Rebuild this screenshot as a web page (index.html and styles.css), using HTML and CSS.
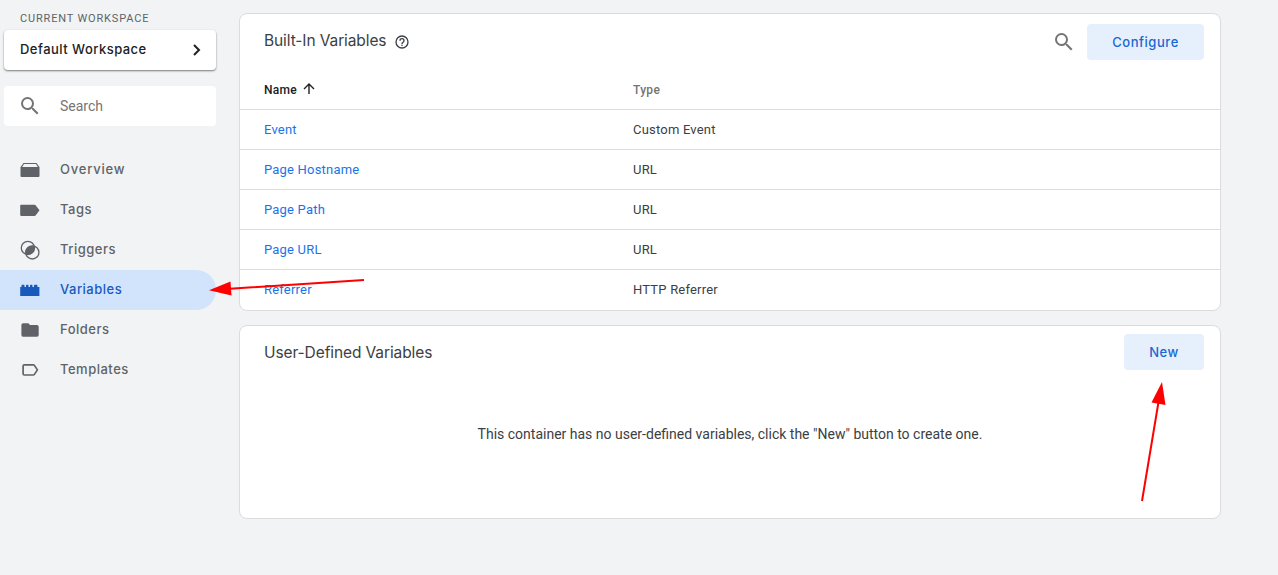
FILE: index.html
```html
<!DOCTYPE html>
<html lang="en">
<head>
<meta charset="utf-8">
<title>Variables</title>
<link rel="stylesheet" href="styles.css">
</head>
<body>
<div class="app">
  <aside class="sidebar">
    <div class="ws-label">CURRENT WORKSPACE</div>
    <div class="workspace"><span>Default Workspace</span>
      <svg width="9" height="12" viewBox="0 0 9 12"><path d="M2 1l5 5-5 5" fill="none" stroke="#202124" stroke-width="2"/></svg>
    </div>
    <div class="search">
      <svg class="icon" viewBox="0 0 24 24"><path fill="#757575" d="M15.5 14h-.79l-.28-.27A6.47 6.47 0 0 0 16 9.500 6.500 6.500 0 1 0 9.500 16c1.610 0 3.090-.59 4.230-1.570l.27.28v.79l5 4.990L20.490 19l-4.990-5zm-6 0C7.010 14 5 11.990 5 9.500S7.010 5 9.500 5 14 7.010 14 9.500 11.990 14 9.500 14z"/></svg>
      <span>Search</span>
    </div>
    <nav class="nav">
      <a class="item"><svg class="icon sm" viewBox="0 0 20 20"><path fill="currentColor" fill-rule="evenodd" d="M3.500 3h13l2.500 3.500 .5.5v9q0 1-1 1h-17q-1 0-1-1V7l.5-.5zM4 4L2.200 7h15.600L16 4z"/></svg><span class="overview">Overview</span></a>
      <a class="item"><svg class="icon sm" viewBox="0 0 20 20"><path fill="currentColor" d="M1 4.700h13.500q.8 0 1.300.7l3.700 4.900-3.700 4.900q-.5.700-1.300.7H1q-.8 0-.8-.8V5.500q0-.8.8-.8z"/></svg><span>Tags</span></a>
      <a class="item"><svg class="icon sm" viewBox="0 0 20 20"><g fill="none" stroke="currentColor" stroke-width="1.300"><circle cx="7.900" cy="7.900" r="6.600"/><circle cx="12.300" cy="12.400" r="6.600"/></g><path fill="currentColor" d="M14.300 6.100A6.600 6.600 0 0 1 5.900 14.200 6.600 6.600 0 0 1 14.300 6.100z"/></svg><span>Triggers</span></a>
      <a class="item active"><svg class="icon sm" viewBox="0 0 20 20"><path fill="currentColor" d="M.2 7h1.300V5.500q0-.7.7-.7h1.600q.7 0 .7.700V7h1.500V5.500q0-.7.7-.7h1.100q.7 0 .7.700V7h1.500V5.500q0-.7.7-.7h1.100q.7 0 .7.700V7H14V5.500q0-.7.7-.7h2q.7 0 .7.700V7h2v9H.2z"/></svg><span>Variables</span></a>
      <a class="item"><svg class="icon sm" viewBox="0 0 20 20"><path fill="currentColor" d="M3 3.300h5.300L10 5h7q1.700 0 1.700 1.700v8.400q0 1.600-1.700 1.600H3q-1.600 0-1.600-1.600V4.900Q1.400 3.300 3 3.300z"/></svg><span>Folders</span></a>
      <a class="item"><svg class="icon sm" viewBox="0 0 20 20"><path fill="none" stroke="currentColor" stroke-width="1.700" stroke-linejoin="round" d="M4.300 4.800h8.900q.8 0 1.200.6l3 4.500-3 4.500q-.4.600-1.200.6H4.300q-1.200 0-1.200-1.200V6q0-1.200 1.200-1.200z"/></svg><span>Templates</span></a>
    </nav>
  </aside>
  <main class="main">
    <section class="card">
      <header class="head">
        <h2>Built-In Variables</h2>
        <svg class="help" viewBox="0 0 24 24"><path fill="#3c4043" d="M11 18h2v-2h-2v2zm1-16a10 10 0 1 0 0 20 10 10 0 0 0 0-20zm0 18a8 8 0 1 1 0-16 8 8 0 0 1 0 16zm0-14a4 4 0 0 0-4 4h2a2 2 0 1 1 4 0c0 2-3 1.750-3 5h2c0-2.250 3-2.500 3-5a4 4 0 0 0-4-4z"/></svg>
        <svg class="icon find" viewBox="0 0 24 24"><path fill="#757575" d="M15.500 14h-.79l-.28-.27A6.470 6.470 0 0 0 16 9.500 6.500 6.500 0 1 0 9.500 16c1.610 0 3.090-.59 4.230-1.570l.27.28v.79l5 4.990L20.490 19l-4.990-5zm-6 0C7.010 14 5 11.990 5 9.500S7.010 5 9.500 5 14 7.010 14 9.500 11.990 14 9.500 14z"/></svg>
        <button class="btn configure">Configure</button>
      </header>
      <div class="row th"><span class="name">Name <svg width="12" height="12" viewBox="0 0 12 12"><path d="M6 11V1M1 6l5-5 5 5" fill="none" stroke="#202124" stroke-width="1.400"/></svg></span><span class="type">Type</span></div>
      <div class="row"><a>Event</a><span>Custom Event</span></div>
      <div class="row"><a>Page Hostname</a><span>URL</span></div>
      <div class="row"><a>Page Path</a><span>URL</span></div>
      <div class="row"><a>Page URL</a><span>URL</span></div>
      <div class="row"><a>Referrer</a><span>HTTP Referrer</span></div>
    </section>
    <section class="card user">
      <header class="head second"><h2>User-Defined Variables</h2><button class="btn new">New</button></header>
      <p class="empty">This container has no user-defined variables, click the "New" button to create one.</p>
    </section>
  </main>
</div>
<svg class="arrows" viewBox="0 0 1278 575"><g stroke="#f00" stroke-width="2"><path d="M364 280L230 288.800M1142 501L1158.500 402"/></g><path fill="#f00" d="M209 290.200L230.500 281.500 231.500 295.500zM1162 382L1151.500 402.500 1165.500 405z"/></svg>
</body>
</html>
```
FILE: styles.css
```css
* { box-sizing: border-box; }
body { margin: 0; height: 575px; overflow: hidden; background: #f1f3f4; font-family: Roboto, sans-serif; color: #3c4043; }
svg { display: block; flex: none; }
.app { display: flex; height: 575px; }
.sidebar { width: 239px; padding: 11px 22px 0 0; flex: none; }
.ws-label { margin-left: 20px; height: 19px; font-size: 11px; line-height: 15px; letter-spacing: .83px; color: #5f6368; }
.workspace { margin-left: 4px; width: 212px; height: 40px; padding: 0 15px 0 16px; display: flex; align-items: center; justify-content: space-between; background: #fff; border-radius: 4px; box-shadow: 0 1px 2px rgba(0,0,0,.5); font: 500 13px/38px Inter, sans-serif; color: #202124; }
.workspace span { padding-bottom: 2px; letter-spacing: .47px; white-space: nowrap; }
.search { margin: 16px 0 24px 4px; width: 212px; height: 40px; padding-left: 14px; display: flex; align-items: center; gap: 18px; background: #fff; border-radius: 4px; font-size: 14px; color: #757575; }
.icon { width: 24px; height: 24px; }
.sm { width: 20px; height: 20px; }
.item { display: flex; align-items: center; gap: 20px; width: 216px; height: 40px; padding-left: 20px; border-radius: 0 20px 20px 0; font: 500 13px/38px Inter, sans-serif; color: #5f6368; }
.item span { padding-bottom: 2px; letter-spacing: .5px; }
.item .overview { letter-spacing: .8px; }
.item.active { background: #d2e3fc; color: #185abc; }
.main { width: 982px; padding-top: 13px; flex: none; }
.card { height: 298px; background: #fff; border: 1px solid #dadce0; border-radius: 8px; }
.user { height: 194px; margin-top: 14px; }
.head { display: flex; align-items: center; height: 56px; padding: 0 16px 0 24px; }
.second { height: 52px; justify-content: space-between; }
h2 { margin: 0; padding-bottom: 2px; font: 400 15.5px/24px Inter, sans-serif; letter-spacing: -.1px; white-space: nowrap; }
.second h2 { padding: 2px 0 0; }
.help { width: 16px; height: 16px; margin-left: 8px; }
.find { margin-left: auto; margin-right: 11px; }
.btn { border: 0; border-radius: 4px; height: 36px; padding: 0; background: #e6f0fd; color: #1967d2; font: 500 13px/36px Inter, sans-serif; letter-spacing: .55px; }
.configure { width: 117px; }
.new { width: 80px; }
.row { display: grid; grid-template-columns: 369px 1fr; align-items: center; height: 40px; padding-left: 24px; border-top: 1px solid #dadce0; font-size: 13px; letter-spacing: .2px; }
.row a { color: #1a73e8; }
.th { height: 39px; border: 0; font-size: 12px; font-weight: 500; letter-spacing: .3px; }
.name { display: flex; align-items: center; gap: 6px; color: #202124; }
.name svg { margin-top: -1px; }
.type { color: #757575; }
.empty { margin: 46px 0 0; font-size: 14px; line-height: 20px; text-align: center; }
.arrows { position: absolute; left: 0; top: 0; width: 1278px; height: 575px; pointer-events: none; }
```
